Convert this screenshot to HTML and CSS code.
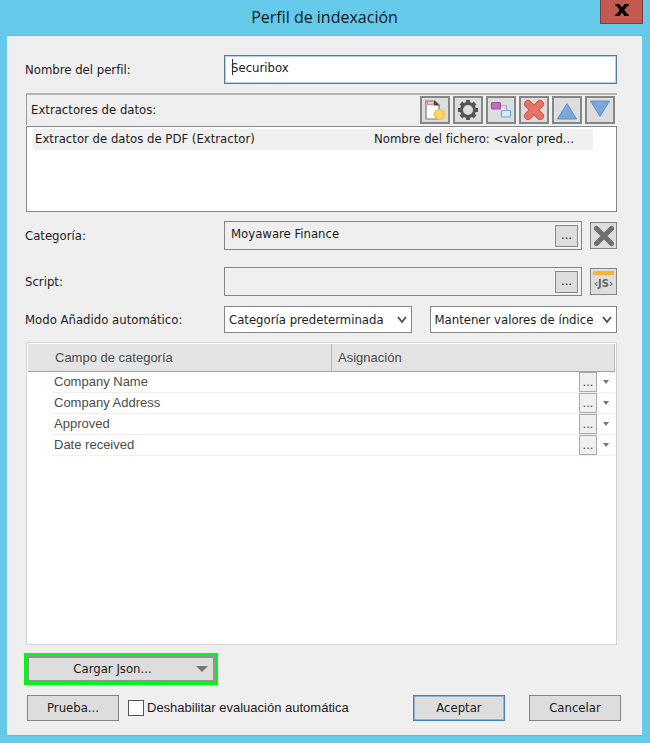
FILE: index.html
```html
<!DOCTYPE html>
<html lang="es">
<head>
<meta charset="utf-8">
<meta name="viewport" content="width=device-width, initial-scale=1">
<title>Perfil de indexación</title>
<link rel="stylesheet" href="styles.css">
</head>
<body>
<main class="window">
  <header class="titlebar">
    <h1 class="title">Perfil de indexación</h1>
    <button class="close" type="button" aria-label="Cerrar">
      <svg width="14" height="12" viewBox="0 0 14 12"><path d="M0 0h4.500l2.500 3.500L9.500 0H14v1.500h-1L9.200 6l3.800 4.500h1V12H9.500L7 8.500 4.500 12H0v-1.500h1L4.800 6 1 1.500H0z" fill="#000"/></svg>
    </button>
  </header>

  <form class="dialog">
    <div class="row row-name">
      <label class="caption" for="name">Nombre del perfil:</label>
      <div class="name-box">
        <input class="name-input" id="name" type="text" value="Securibox">
        <span class="caret"></span>
      </div>
    </div>

    <section class="extractors">
      <div class="toolbar">
        <span class="toolbar-title">Extractores de datos:</span>
        <button class="tool" type="button" aria-label="Nuevo">
          <svg width="22" height="22" viewBox="0 0 22 22"><path d="M2 2h9l4 4v14H2z" fill="#fff" stroke="#777" stroke-width="1.200"/><path d="M10 1.500l5.500 5H10z" fill="#444"/><path d="M2.500 2H10v4H2.500z" fill="#e88b80"/><path d="M4 4h5" stroke="#fff"/><circle cx="15.500" cy="15.500" r="5" fill="#ffd768" stroke="#f1ba46" stroke-width="1.200"/></svg>
        </button>
        <button class="tool" type="button" aria-label="Configurar">
          <svg width="22" height="22" viewBox="0 0 22 22"><path d="M11 1v4M11 17v4M1 11h4M17 11h4M4 4l3 3M15 15l3 3M4 18l3-3M15 7l3-3" stroke="#555" stroke-width="4"/><circle cx="11" cy="11" r="6.500" fill="#ddd" stroke="#555" stroke-width="3"/></svg>
        </button>
        <button class="tool" type="button" aria-label="Correspondencias">
          <svg width="22" height="22" viewBox="0 0 22 22"><path d="M10 6.500h6.500V12" fill="none" stroke="#8fb2da" stroke-width="1.200"/><rect x="1.500" y="3.500" width="9" height="6.500" rx="1" fill="#bd70bd" stroke="#9c519e" stroke-width="1.200"/><rect x="11.500" y="11.500" width="9" height="6.500" rx="1" fill="#d9eafb" stroke="#7aa5d8" stroke-width="1.200"/></svg>
        </button>
        <button class="tool" type="button" aria-label="Eliminar">
          <svg width="22" height="22" viewBox="0 0 22 22"><path d="M5 5l12 12M17 5L5 17" stroke="#cf5548" stroke-width="8" stroke-linecap="round"/><path d="M5 5l12 12M17 5L5 17" stroke="#e87469" stroke-width="6" stroke-linecap="round"/></svg>
        </button>
        <button class="tool" type="button" aria-label="Subir">
          <svg width="22" height="22" viewBox="0 0 22 22"><path d="M11 4.500L20.500 20h-19z" fill="#7ba7d9" stroke="#5d8fca"/></svg>
        </button>
        <button class="tool" type="button" aria-label="Bajar">
          <svg width="22" height="22" viewBox="0 0 22 22"><path d="M11 17.500L20.500 2h-19z" fill="#7ba7d9" stroke="#5d8fca"/></svg>
        </button>
      </div>
      <ul class="list">
        <li class="list-item"><span>Extractor de datos de PDF (Extractor)</span><span class="list-file">Nombre del fichero: &lt;valor pred...</span></li>
      </ul>
    </section>

    <div class="row row-category">
      <label class="caption" for="category">Categoría:</label>
      <div class="picker">
        <input class="picker-input" id="category" type="text" value="Moyaware Finance" readonly>
        <button class="browse" type="button">...</button>
      </div>
      <button class="side" type="button" aria-label="Quitar categoría">
        <svg width="22" height="22" viewBox="0 0 22 22"><path d="M3.500 3.500l15 15M18.500 3.500l-15 15" stroke="#6f6f6f" stroke-width="5" stroke-linecap="round"/></svg>
      </button>
    </div>

    <div class="row row-script">
      <label class="caption" for="script">Script:</label>
      <div class="picker">
        <input class="picker-input" id="script" type="text" readonly>
        <button class="browse" type="button">...</button>
      </div>
      <button class="side side-js" type="button">‹JS›</button>
    </div>

    <div class="row row-mode">
      <label class="caption" for="mode">Modo Añadido automático:</label>
      <div class="selects">
        <div class="select-box">
          <select class="select" id="mode"><option>Categoría predeterminada</option></select>
          <svg class="chevron" width="10" height="8" viewBox="0 0 10 8"><path d="M1 1L5 6 9 1" fill="none" stroke="#555" stroke-width="2"/></svg>
        </div>
        <div class="select-box">
          <select class="select" aria-label="Valores de índice"><option>Mantener valores de índice</option></select>
          <svg class="chevron" width="10" height="8" viewBox="0 0 10 8"><path d="M1 1L5 6 9 1" fill="none" stroke="#555" stroke-width="2"/></svg>
        </div>
      </div>
    </div>

    <div class="grid-box">
      <table class="fields">
        <colgroup><col class="col-gutter"><col class="col-field"><col></colgroup>
        <thead>
          <tr><th class="head-field" colspan="2">Campo de categoría</th><th>Asignación</th></tr>
        </thead>
        <tbody>
          <tr><td class="gutter"></td><td class="field">Company Name</td><td><div class="assign"><button class="cell-browse" type="button">...</button><button class="cell-drop" type="button" aria-label="Opciones de Company Name"></button></div></td></tr>
          <tr><td class="gutter"></td><td class="field">Company Address</td><td><div class="assign"><button class="cell-browse" type="button">...</button><button class="cell-drop" type="button" aria-label="Opciones de Company Address"></button></div></td></tr>
          <tr><td class="gutter"></td><td class="field">Approved</td><td><div class="assign"><button class="cell-browse" type="button">...</button><button class="cell-drop" type="button" aria-label="Opciones de Approved"></button></div></td></tr>
          <tr><td class="gutter"></td><td class="field">Date received</td><td><div class="assign"><button class="cell-browse" type="button">...</button><button class="cell-drop" type="button" aria-label="Opciones de Date received"></button></div></td></tr>
        </tbody>
      </table>
    </div>

    <div class="highlight">
      <button class="load" type="button"><span class="load-text">Cargar Json...</span><span class="load-arrow"></span></button>
    </div>

    <footer class="footer">
      <button class="btn" type="button">Prueba...</button>
      <label class="check"><input class="check-box" type="checkbox">Deshabilitar evaluación automática</label>
      <button class="btn btn-default" type="submit">Aceptar</button>
      <button class="btn" type="button">Cancelar</button>
    </footer>
  </form>
</main>
</body>
</html>
```
FILE: styles.css
```css
* {
  box-sizing: border-box;
}

body {
  margin: 0;
  background: #65c9ea;
  color: #1b1b1b;
  font: 13px/18px "DejaVu Sans Condensed", "Noto Sans", sans-serif;
}

button,
input,
select {
  margin: 0;
  padding: 0;
  color: inherit;
  font: inherit;
}

button {
  border: 2px solid #868686;
  border-radius: 0;
  background: #dddddd;
}

.window {
  display: flex;
  flex-direction: column;
  min-height: 100vh;
  padding: 0 8px 7px 7px;
}

.titlebar {
  display: flex;
  justify-content: center;
  position: relative;
  height: 35px;
}

.title {
  margin: 0;
  color: #10181c;
  font: 400 16px/35px "Open Sans", "Noto Sans", sans-serif;
}

.close {
  position: absolute;
  top: 0;
  right: -1px;
  display: flex;
  align-items: center;
  justify-content: center;
  width: 43px;
  height: 24px;
  padding-bottom: 4px;
  border: 1px solid #74413d;
  border-top: 0;
  background: #c35a50;
}

.dialog {
  display: flex;
  flex: 1;
  flex-direction: column;
  padding: 19px 25px 14px 18px;
  border-top: 1px solid #8babb8;
  border-bottom: 1px solid #8babb8;
  background: #efefef;
}

.row {
  display: grid;
  grid-template-columns: 199px 1fr;
  align-items: center;
}

.name-box {
  position: relative;
  height: 29px;
}

.name-input {
  display: block;
  width: 100%;
  height: 100%;
  padding: 0 6px 4px;
  border: 1px solid #527ba2;
  outline: 1px solid #b7d0e5;
  outline-offset: -2px;
  background: #fff;
}

.caret {
  position: absolute;
  top: 4px;
  left: 8px;
  width: 1px;
  height: 16px;
  background: #333;
}

.extractors {
  margin: 9px 0 0 1px;
}

.toolbar {
  display: flex;
  align-items: center;
  gap: 3px;
  height: 32px;
  padding: 0 2px 0 4px;
  border-top: 2px solid #b4b4b4;
  border-left: 1px solid #9a9a9a;
}

.toolbar-title {
  flex: 1;
}

.tool {
  display: flex;
  align-items: center;
  justify-content: center;
  width: 30px;
  height: 28px;
}

.list {
  height: 86px;
  margin: 1px 0 0;
  padding: 2px 23px 0 6px;
  border: 1px solid #828790;
  background: #fff;
  list-style: none;
}

.list-item {
  display: grid;
  grid-template-columns: 339px 1fr;
  padding: 1px 0 2px 2px;
  background: #f0f0f0;
  white-space: nowrap;
}

.row-category {
  grid-template-columns: 199px 1fr 27px;
  margin-top: 9px;
}

.row-script {
  grid-template-columns: 199px 1fr 27px;
  margin-top: 17px;
}

.picker {
  display: flex;
  align-items: center;
  height: 29px;
  margin-right: 8px;
  padding-right: 3px;
  border: 1px solid #868686;
}

.picker-input {
  flex: 1;
  min-width: 0;
  height: 100%;
  padding: 0 6px 4px;
  border: 0;
  outline: 0;
  background: transparent;
}

.browse {
  width: 23px;
  height: 22px;
  padding-bottom: 2px;
  border-width: 1px;
  outline: 1px solid #fafafa;
  line-height: 14px;
}

.side {
  display: flex;
  align-items: center;
  justify-content: center;
  width: 27px;
  height: 27px;
  border-width: 1px;
}

.side-js {
  padding-top: 4px;
  background: linear-gradient(#f6b431, #f6b431) 2px 2px / 21px 4px no-repeat #dddddd;
  color: #666;
  font: bold 11px/14px "Liberation Sans Narrow", "DejaVu Sans Condensed", sans-serif;
}

.row-mode {
  margin-top: 10px;
}

.selects {
  display: grid;
  grid-template-columns: 1fr 1fr;
  gap: 18px;
}

.select-box {
  position: relative;
}

.select {
  display: block;
  width: 100%;
  height: 27px;
  padding: 0 22px 0 4px;
  border: 1px solid #868686;
  border-radius: 0;
  appearance: none;
  background: #fff;
}

.chevron {
  position: absolute;
  top: 10px;
  right: 5px;
  pointer-events: none;
}

.grid-box {
  flex: 1;
  margin: 9px 0 0 1px;
  padding: 1px;
  border: 1px solid #d3d3d3;
  background: #fff;
}

.fields {
  width: 100%;
  border-collapse: separate;
  border-spacing: 0;
  color: #4b4b4b;
  font: 14px/18px "Liberation Sans", sans-serif;
  font-size: 13px;
  table-layout: fixed;
}

.col-gutter {
  width: 24px;
}

.col-field {
  width: 280px;
}

.fields th {
  height: 28px;
  padding: 0 6px;
  border-right: 1px solid #b5b5b5;
  border-bottom: 1px solid #a2a2a2;
  background: #e4e4e4;
  font-weight: 400;
  text-align: left;
}

.fields .head-field {
  padding-left: 27px;
}

.fields td {
  height: 21px;
  padding: 0;
  border-bottom: 1px solid #efefef;
}

.fields .gutter {
  border-bottom-color: #fff;
}

.fields .field {
  padding-left: 2px;
}

.assign {
  display: flex;
  justify-content: flex-end;
}

.cell-browse {
  width: 18px;
  height: 20px;
  border: 1px solid #aaa;
  background: #efefef;
  line-height: 18px;
}

.cell-drop {
  display: flex;
  align-items: center;
  justify-content: center;
  width: 18px;
  height: 20px;
  border: 0;
  background: transparent;
}

.cell-drop::before {
  border: 3px solid transparent;
  border-top: 4px solid #777;
  border-bottom: 0;
  content: "";
}

.highlight {
  width: 194px;
  margin: 8px 0 0 -1px;
  border: 3px solid #00f714;
}

.load {
  display: flex;
  align-items: center;
  width: 100%;
  height: 26px;
  padding-right: 5px;
  border-color: #929292;
}

.load-text {
  flex: 1;
}

.load-arrow {
  border: 6px solid transparent;
  border-top-color: #777;
  border-bottom: 0;
}

.footer {
  display: flex;
  align-items: center;
  gap: 24px;
  margin: 10px -4px 0 2px;
}

.btn {
  width: 92px;
  height: 26px;
  border-width: 1px;
}

.btn-default {
  border-color: #4682b8;
  outline: 1px solid #91b3d0;
  outline-offset: -2px;
}

.check {
  display: flex;
  flex: 1;
  gap: 3px;
  align-items: center;
  margin-left: -15px;
  font: 13px/18px "Liberation Sans", sans-serif;
  white-space: nowrap;
}

.check-box {
  width: 16px;
  height: 16px;
  border: 1px solid #555;
  appearance: none;
  background: #fff;
}

.check-box:checked {
  background: #4682b8;
}
```
